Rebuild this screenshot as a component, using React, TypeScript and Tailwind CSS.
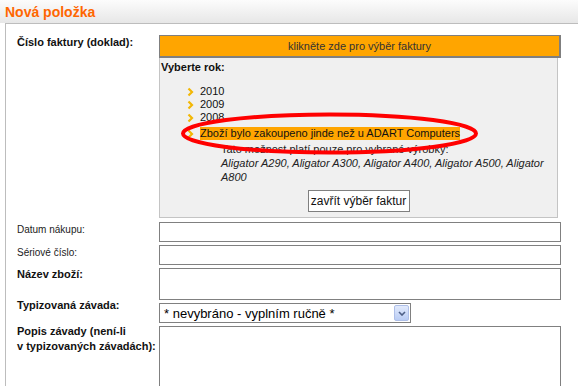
import React from "react";

const years = ["2010", "2009", "2008"];

function Chevron() {
  return (
    <svg width="7" height="10" viewBox="0 0 7 10" className="shrink-0">
      <path d="M1.5 1.5 L5 5 L1.5 8.5" fill="none" stroke="#f2b705" strokeWidth="2.2" />
    </svg>
  );
}

function FieldRow(props: { label: React.ReactNode; labelClass?: string; children: React.ReactNode; className?: string }) {
  return (
    <div className={"flex items-start " + (props.className || "")}>
      <div className={"w-[153px] shrink-0 pl-[11px] " + (props.labelClass || "")}>{props.label}</div>
      <div className="leading-none">{props.children}</div>
    </div>
  );
}

export default function App() {
  return (
    <div className="relative w-[578px] h-[386px] overflow-hidden bg-white text-[#111] font-['Liberation_Sans',Arial,sans-serif]">
      {/* header */}
      <div className="h-[23px] pl-[5px] pt-[4px] bg-gradient-to-b from-[#fcfcfc] to-[#e7e7e7]">
        <h1 className="text-[14px] leading-[16px] font-bold text-[#ff6600]">Nová položka</h1>
      </div>

      <div className="ml-[5px] border-t border-l border-[#bdbdbd] pt-[11px] h-[400px]">
        {/* invoice number */}
        <FieldRow label="Číslo faktury (doklad):" labelClass="pt-[1px] text-[11px] leading-[13px] font-bold">
          <div className="w-[402px]">
            <div className="h-[23px] bg-[#ffa500] border-t border-l border-r-2 border-b-2 border-[#7f7f7f] flex items-center justify-center text-[11px] text-[#333]">
              klikněte zde pro výběr faktury
            </div>
            <div className="w-[399px] bg-[#f0f0f0] border-l border-r border-b border-[#c4c4c4] pt-[3px] pb-[5px] text-[11px]">
              <div className="pl-[1px] leading-[13px] font-bold">Vyberte rok:</div>
              <ul className="mt-[11px] pl-[27px] leading-[13px]">
                {years.map((y) => (
                  <li key={y} className="flex items-center gap-[6px] h-[13px]">
                    <Chevron />
                    <span>{y}</span>
                  </li>
                ))}
                <li className="mt-[3px] flex items-center gap-[6px] h-[13px]">
                  <Chevron />
                  <span className="bg-[#ffa500]">Zboží bylo zakoupeno jinde než u ADART Computers</span>
                </li>
              </ul>
              <div className="mt-[2px] ml-[61px] w-[335px] leading-[14px] text-[#222]">
                <div>Tato možnost platí pouze pro vybrané výrobky:</div>
                <div className="italic">Aligator A290, Aligator A300, Aligator A400, Aligator A500, Aligator A800</div>
              </div>
              <div className="mt-[6px] flex justify-center">
                <div className="h-[22px] w-[102px] bg-white border border-[#7f7f7f] flex items-center justify-center text-[12px] text-[#111]">
                  zavřít výběr faktur
                </div>
              </div>
            </div>
          </div>
        </FieldRow>

        <FieldRow className="mt-[4px]" label="Datum nákupu:" labelClass="pt-[2px] text-[10px] leading-[12px] text-[#222]">
          <div className="w-[402px] h-[20px] border border-[#808080] bg-white" />
        </FieldRow>

        <FieldRow className="mt-[3px]" label="Sériové číslo:" labelClass="pt-[2px] text-[10px] leading-[12px] text-[#222]">
          <div className="w-[402px] h-[20px] border border-[#808080] bg-white" />
        </FieldRow>

        <FieldRow className="mt-[3px]" label="Název zboží:" labelClass="text-[11px] leading-[13px] font-bold">
          <div className="w-[402px] h-[32px] border border-[#808080] bg-white" />
        </FieldRow>

        <FieldRow className="mt-[3px]" label="Typizovaná závada:" labelClass="-mt-[4px] text-[11px] leading-[13px] font-bold">
          <div className="w-[252px] h-[20px] border border-[#808080] bg-white flex items-center justify-between pl-[4px] pr-[1px]">
            <span className="text-[13px] leading-[15px] text-black">* nevybráno - vyplním ručně *</span>
            <div className="w-[15px] h-[16px] rounded-[2px] border border-[#aebfe8] bg-gradient-to-b from-[#e2eafc] to-[#b9ccf4] flex items-center justify-center">
              <svg width="8" height="5" viewBox="0 0 8 5">
                <path d="M1 1 L4 4 L7 1" fill="none" stroke="#4d5f86" strokeWidth="1.6" />
              </svg>
            </div>
          </div>
        </FieldRow>

        <FieldRow
          className="mt-[3px]"
          label={
            <>
              Popis závady (není-li
              <br />v typizovaných závadách):
            </>
          }
          labelClass="-mt-[2px] text-[11px] leading-[15px] font-bold"
        >
          <div className="w-[402px] h-[90px] border border-[#808080] bg-white" />
        </FieldRow>
      </div>

      {/* hand-drawn highlight mark */}
      <svg className="absolute left-0 top-0 pointer-events-none" width="578" height="386">
        <ellipse cx="329.5" cy="133.5" rx="146.5" ry="19" fill="none" stroke="#ff0000" strokeWidth="4" />
      </svg>
    </div>
  );
}
